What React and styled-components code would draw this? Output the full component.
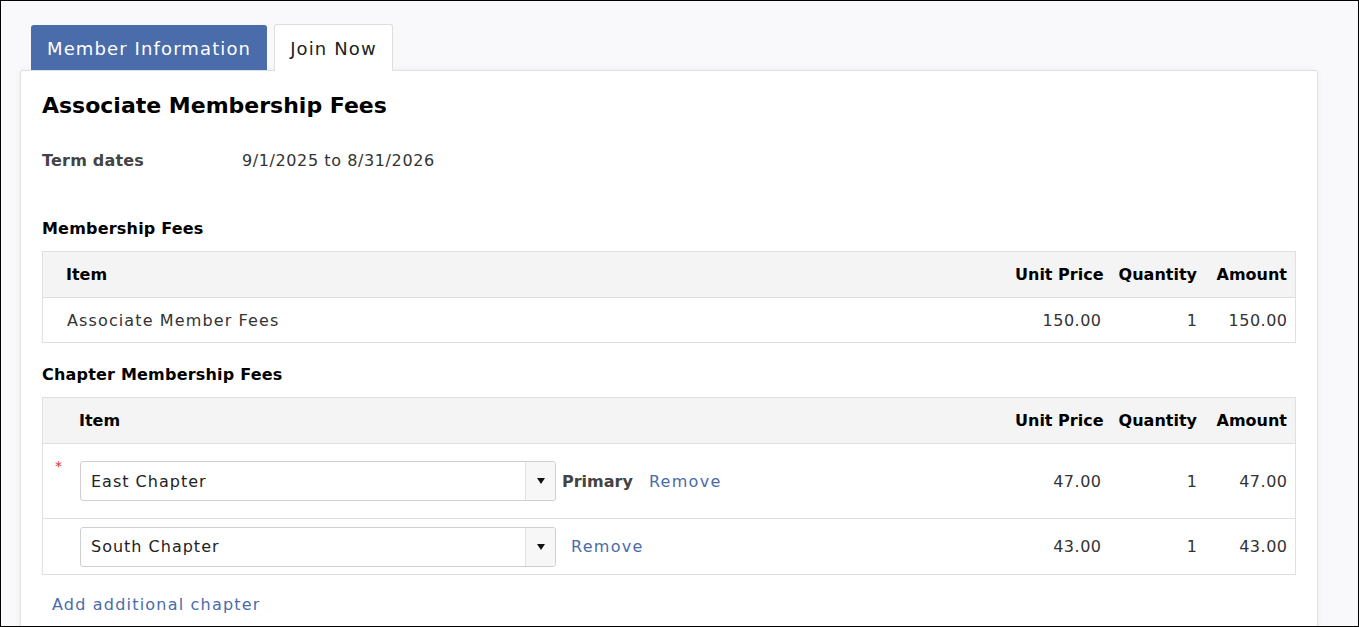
import React from 'react'
import styled, { createGlobalStyle } from 'styled-components'

const GlobalStyle = createGlobalStyle`
  html, body {
    margin: 0;
    padding: 0;
    background: #ffffff;
  }
  body {
    font-family: 'DejaVu Sans', Inter, sans-serif;
    color: #333;
    letter-spacing: 0.07em;
  }
  * {
    box-sizing: border-box;
  }
`

const Page = styled.div`
  width: 1359px;
  height: 627px;
  border: 1px solid #000;
  background: #f9f9fb;
  overflow: hidden;
  padding: 23px 0 0 19px;
`

const Tabs = styled.div`
  display: flex;
  align-items: flex-end;
  gap: 7px;
  margin-left: 11px;
  position: relative;
  z-index: 1;
`

const Tab = styled.div`
  height: ${(p) => (p.active ? '45px' : '47px')};
  padding: 0 15px;
  display: flex;
  align-items: center;
  font-size: 18px;
  border-radius: 3px 3px 0 0;
  background: ${(p) => (p.active ? '#4a6caa' : '#fff')};
  color: ${(p) => (p.active ? '#fff' : '#222')};
  border: 1px solid ${(p) => (p.active ? '#4a6caa' : '#dedede')};
  border-bottom: none;
  margin-bottom: ${(p) => (p.active ? '0' : '-1px')};
`

const Card = styled.div`
  width: 1298px;
  background: #fff;
  border: 1px solid #e0e0e0;
  border-radius: 3px 3px 0 0;
  box-shadow: 0 0 6px rgba(0, 0, 0, 0.06);
  padding: 18px 21px 0 21px;
  height: 600px;
`

const Title = styled.h1`
  margin: 0;
  font-size: 22px;
  font-weight: 700;
  color: #000;
  line-height: 33px;
  letter-spacing: 0;
`

const TermRow = styled.div`
  display: flex;
  margin-top: 27px;
  font-size: 16px;
  line-height: 24px;
`

const TermLabel = styled.div`
  width: 200px;
  font-weight: 600;
  color: #444;
  letter-spacing: 0.2px;
`

const TermValue = styled.div`
  color: #333;
  letter-spacing: 0.6px;
`

const SectionTitle = styled.h2`
  margin: ${(p) => p.top}px 0 10px;
  font-size: 16px;
  font-weight: 700;
  color: #000;
  line-height: 24px;
  letter-spacing: 0.2px;
`

const Table = styled.div`
  border: 1px solid #e0e0e0;
`

const Row = styled.div`
  display: grid;
  grid-template-columns: ${(p) => (p.marker ? '36px 1fr 102px 96px 90px' : '1fr 102px 96px 90px')};
  align-items: center;
  min-height: ${(p) => p.h}px;
  background: ${(p) => (p.head ? '#f4f4f4' : '#fff')};
  border-top: ${(p) => (p.first ? 'none' : '1px solid #e0e0e0')};
  font-size: 16px;
  font-weight: ${(p) => (p.head ? 700 : 400)};
  color: ${(p) => (p.head ? '#000' : '#333')};
  letter-spacing: ${(p) => (p.head ? '0' : '0.07em')};
`

const Cell = styled.div`
  padding: 0 8px;
  text-align: ${(p) => (p.right ? 'right' : 'left')};
  white-space: nowrap;
`

const NumCell = styled(Cell)`
  letter-spacing: 0.5px;
  margin-right: -0.5px;
`

const ItemCell = styled.div`
  padding-left: ${(p) => p.pad}px;
  display: flex;
  align-items: center;
`

const Marker = styled.div`
  color: #d0342c;
  font-size: 14px;
  padding-left: 12px;
  align-self: flex-start;
  margin-top: 14px;
`

const Select = styled.div`
  width: 476px;
  height: 40px;
  border: 1px solid #cfcfcf;
  border-radius: 3px;
  display: flex;
  align-items: stretch;
  background: #fff;
`

const SelectText = styled.div`
  flex: 1;
  padding-left: 10px;
  display: flex;
  align-items: center;
  color: #222;
  letter-spacing: 1px;
`

const SelectArrow = styled.div`
  width: 30px;
  background: #f7f7f7;
  border-left: 1px solid #e2e2e2;
  display: flex;
  align-items: center;
  justify-content: center;
  border-radius: 0 3px 3px 0;
`

const Primary = styled.span`
  font-weight: 700;
  color: #444;
  margin-left: 6px;
  letter-spacing: 0;
`

const Link = styled.a`
  color: #4a6caa;
  text-decoration: none;
  margin-left: ${(p) => p.gap}px;
  cursor: pointer;
  letter-spacing: 1.3px;
`

const AddLink = styled(Link)`
  display: inline-block;
  margin: 18px 0 0 10px;
  font-size: 16px;
  line-height: 24px;
  letter-spacing: 1.2px;
`

const Caret = () => (
  <svg width="8" height="6" viewBox="0 0 8 6">
    <path d="M0 0h8L4 6z" fill="#111" />
  </svg>
)

const chapters = [
  { name: 'East Chapter', price: '47.00', qty: 1, amount: '47.00', primary: true },
  { name: 'South Chapter', price: '43.00', qty: 1, amount: '43.00', primary: false },
]

export default function App() {
  return (
    <>
      <GlobalStyle />
      <Page>
        <Tabs>
          <Tab active>Member Information</Tab>
          <Tab>Join Now</Tab>
        </Tabs>
        <Card>
          <Title>Associate Membership Fees</Title>
          <TermRow>
            <TermLabel>Term dates</TermLabel>
            <TermValue>9/1/2025 to 8/31/2026</TermValue>
          </TermRow>

          <SectionTitle top={44}>Membership Fees</SectionTitle>
          <Table>
            <Row head first h={45}>
              <ItemCell pad={23}>Item</ItemCell>
              <Cell right>Unit Price</Cell>
              <Cell right>Quantity</Cell>
              <Cell right>Amount</Cell>
            </Row>
            <Row h={45}>
              <ItemCell pad={24}>Associate Member Fees</ItemCell>
              <NumCell right>150.00</NumCell>
              <NumCell right>1</NumCell>
              <NumCell right>150.00</NumCell>
            </Row>
          </Table>

          <SectionTitle top={20}>Chapter Membership Fees</SectionTitle>
          <Table>
            <Row head first marker h={45}>
              <span />
              <ItemCell pad={0}>Item</ItemCell>
              <Cell right>Unit Price</Cell>
              <Cell right>Quantity</Cell>
              <Cell right>Amount</Cell>
            </Row>
            {chapters.map((c, i) => (
              <Row key={c.name} marker h={i === 0 ? 75 : 56}>
                {c.primary ? <Marker>*</Marker> : <span />}
                <ItemCell pad={1}>
                  <Select>
                    <SelectText>{c.name}</SelectText>
                    <SelectArrow>
                      <Caret />
                    </SelectArrow>
                  </Select>
                  {c.primary && <Primary>Primary</Primary>}
                  <Link gap={c.primary ? 16 : 15}>Remove</Link>
                </ItemCell>
                <NumCell right>{c.price}</NumCell>
                <NumCell right>{c.qty}</NumCell>
                <NumCell right>{c.amount}</NumCell>
              </Row>
            ))}
          </Table>
          <AddLink>Add additional chapter</AddLink>
        </Card>
      </Page>
    </>
  )
}
